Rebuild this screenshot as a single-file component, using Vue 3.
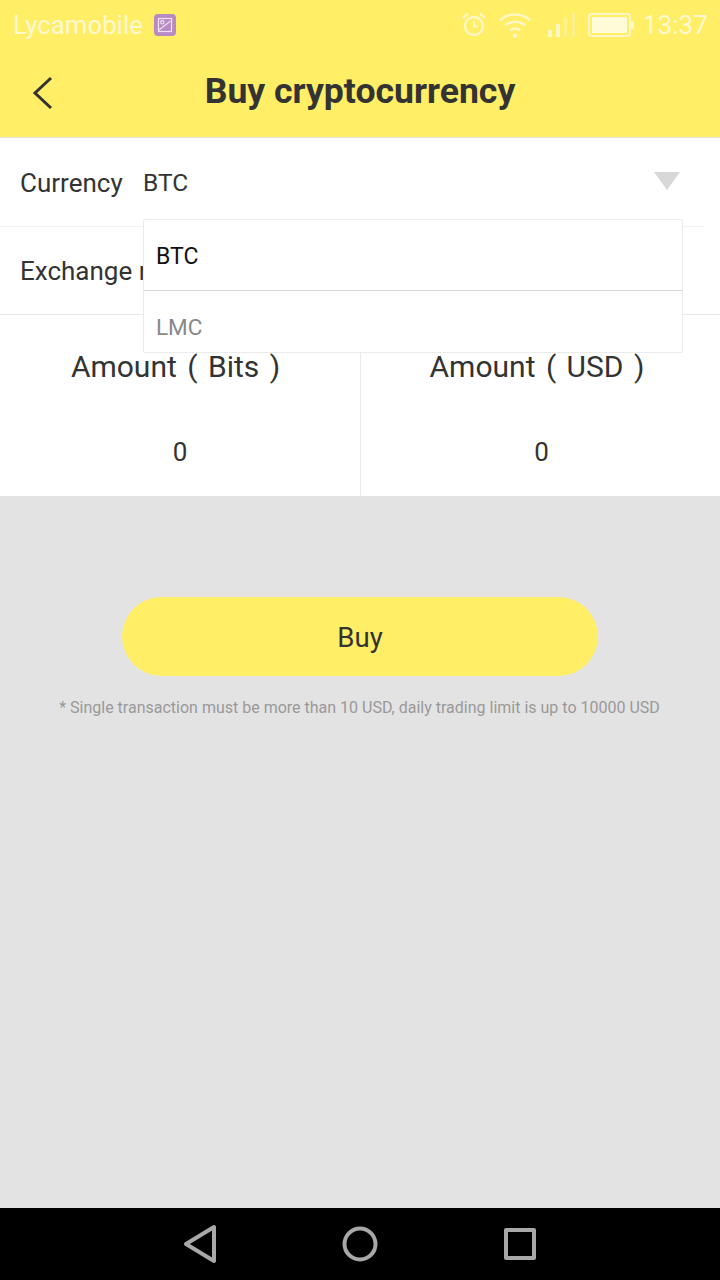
<script setup>
const amounts = [
  { label: 'Amount ( Bits )', value: 0 },
  { label: 'Amount ( USD )', value: 0 },
]
const options = ['BTC', 'LMC']
</script>

<template>
  <div class="page">
    <div class="top">
      <div class="status">
        <span class="carrier">Lycamobile</span>
        <svg class="sim" width="24" height="24" viewBox="0 0 24 24">
          <rect x="1" y="1" width="22" height="22" rx="4" fill="#b78ac4" />
          <rect x="5.5" y="5.5" width="13" height="13" fill="none" stroke="#f1e2f2" stroke-width="1.2" />
          <circle cx="9.3" cy="9.3" r="1.7" fill="none" stroke="#f1e2f2" stroke-width="1.1" />
          <path d="M6 17 L17.5 8" stroke="#f1e2f2" stroke-width="1.1" />
        </svg>
        <div class="status-right">
          <svg class="alarm" width="26" height="28" viewBox="0 0 26 28" fill="none" stroke="#fff7c4" stroke-width="2.4">
            <circle cx="13" cy="15" r="9" />
            <path d="M13 10 V15.5 H17" stroke-width="2" />
            <path d="M2 7 L7 2.5 M24 7 L19 2.5" />
          </svg>
          <svg width="34" height="28" viewBox="0 0 34 28" fill="none" stroke="#fff7c4" stroke-width="2.6">
            <path d="M2 9.5 C10 1.5 24 1.5 32 9.5" />
            <path d="M7 14.5 C12.5 9.5 21.5 9.5 27 14.5" />
            <path d="M12 19.5 C15 17 19 17 22 19.5" />
            <circle cx="17" cy="24.5" r="2.2" fill="#fff7c4" stroke="none" />
          </svg>
          <svg class="signal" width="30" height="26" viewBox="0 0 30 26" fill="#fff7c4">
            <rect x="1" y="18" width="4" height="7" />
            <rect x="9" y="12" width="4" height="13" />
            <rect x="17" y="6" width="3" height="19" opacity="0.4" />
            <rect x="25" y="1" width="3" height="24" opacity="0.4" />
          </svg>
          <svg class="battery" width="46" height="24" viewBox="0 0 46 24">
            <rect x="1" y="1" width="41" height="22" rx="3" fill="none" stroke="#fff7c4" stroke-width="2" />
            <rect x="4" y="4" width="35" height="16" fill="#fffad8" />
            <rect x="43" y="8" width="3" height="8" fill="#fff7c4" />
          </svg>
          <span class="clock">13:37</span>
        </div>
      </div>
      <div class="header">
        <svg class="back" width="22" height="34" viewBox="0 0 22 34" fill="none" stroke="#333" stroke-width="3">
          <path d="M19 2 L3 17 L19 32" />
        </svg>
        <h1>Buy cryptocurrency</h1>
      </div>
    </div>

    <div class="form">
      <div class="row first">
        <span class="label">Currency</span>
        <span class="val">BTC</span>
        <span class="caret"></span>
      </div>
      <div class="row second">
        <span class="label">Exchange rate</span>
      </div>
      <div class="dropdown">
        <div v-for="(o, i) in options" :key="o" :class="['opt', { on: i === 0 }]">{{ o }}</div>
      </div>
    </div>

    <div class="amounts">
      <div v-for="a in amounts" :key="a.label" class="cell">
        <div class="amt-label">{{ a.label }}</div>
        <div class="amt-value">{{ a.value }}</div>
      </div>
    </div>

    <div class="body">
      <button class="buy">Buy</button>
      <p class="note">* Single transaction must be more than 10 USD, daily trading limit is up to 10000 USD</p>
    </div>

    <div class="nav">
      <svg width="36" height="40" viewBox="0 0 36 40" fill="none" stroke="#a8a8a8" stroke-width="4" stroke-linejoin="round">
        <path d="M31 3 V37 L3 20 Z" />
      </svg>
      <svg width="36" height="36" viewBox="0 0 36 36" fill="none" stroke="#a8a8a8" stroke-width="4">
        <circle cx="18" cy="18" r="15.5" />
      </svg>
      <svg class="square" width="34" height="34" viewBox="0 0 34 34" fill="none" stroke="#a8a8a8" stroke-width="4" stroke-linejoin="round">
        <rect x="3" y="3" width="28" height="28" />
      </svg>
    </div>
  </div>
</template>

<style scoped>
.page {
  width: 720px;
  height: 1280px;
  display: flex;
  flex-direction: column;
  background: #e3e3e3;
  font-family: Roboto, "Liberation Sans", sans-serif;
  color: #333;
  overflow: hidden;
}
.top { background: #ffee66; height: 137px; flex-shrink: 0; }
.status {
  height: 48px;
  display: flex;
  align-items: center;
  padding: 2px 12px 0 13px;
  box-sizing: border-box;
}
.carrier { font-size: 25.8px; color: #fff9cf; }
.sim { margin-left: 10px; }
.status-right { margin-left: auto; display: flex; align-items: center; gap: 9px; }
.alarm { margin-right: 2px; }
.signal { margin-left: 6px; }
.battery { margin-left: 2px; }
.clock { font-size: 26.2px; color: #fff9cf; }
.header {
  height: 89px;
  display: flex;
  align-items: center;
  justify-content: center;
  position: relative;
  padding-bottom: 3px;
  box-sizing: border-box;
}
.back { position: absolute; left: 32px; top: 28px; }
h1 { margin: 0; font-size: 35.6px; font-weight: 700; color: #333; }
.form { background: #fff; position: relative; height: 176px; border-bottom: 1px solid #e8e8e8; flex-shrink: 0; margin-top: 1px; }
.row {
  display: flex;
  align-items: center;
  padding: 1px 0 0 20px;
  font-size: 26px;
  box-sizing: border-box;
}
.row.first { height: 89px; margin-right: 16px; border-bottom: 1px solid #f2f2f2; }
.row.second { height: 87px; }
.label { color: #333; white-space: nowrap; }
.val { position: absolute; left: 143px; top: 30px; font-size: 24.5px; line-height: 30px; }
.caret {
  position: absolute;
  left: 654px;
  top: 34px;
  width: 0;
  height: 0;
  border-left: 13px solid transparent;
  border-right: 13px solid transparent;
  border-top: 18px solid #d8d8d8;
}
.dropdown {
  position: absolute;
  left: 143px;
  top: 81px;
  width: 540px;
  height: 134px;
  box-sizing: border-box;
  background: #fff;
  border: 1px solid #ebebeb;
  border-radius: 2px;
  z-index: 2;
}
.opt {
  height: 62px;
  display: flex;
  align-items: center;
  padding: 10px 0 0 12px;
  font-size: 22.5px;
  color: #888;
  box-sizing: border-box;
}
.opt.on { color: #111; border-bottom: 1px solid #d6d6d6; padding-top: 2px; height: 71px; font-size: 23px; }
.amounts { display: flex; background: #fff; height: 181px; flex-shrink: 0; }
.cell { width: 360px; flex: none; text-align: center; padding-top: 32px; box-sizing: border-box; }
.cell + .cell { border-left: 1px solid #ebebeb; padding-left: 1px; width: 361px; }
.amt-label { font-size: 30px; line-height: 40px; white-space: nowrap; word-spacing: 3px; padding-right: 9px; }
.amt-value { font-size: 26px; line-height: 32px; margin-top: 49px; }
.body { flex: 1; display: flex; flex-direction: column; align-items: center; padding-top: 101px; }
.buy {
  width: 476px;
  height: 79px;
  padding: 2px 0 0;
  border: 0;
  border-radius: 40px;
  background: #ffee66;
  font: 400 27.6px Roboto, "Liberation Sans", sans-serif;
  color: #333;
}
.note { margin: 22px 0 0; padding-right: 1px; font-size: 16px; line-height: 20px; color: #999; white-space: nowrap; }
.nav {
  height: 72px;
  flex-shrink: 0;
  background: #000;
  display: flex;
  align-items: center;
  justify-content: center;
  gap: 123px;
}
.square { margin-left: 2px; }
</style>
